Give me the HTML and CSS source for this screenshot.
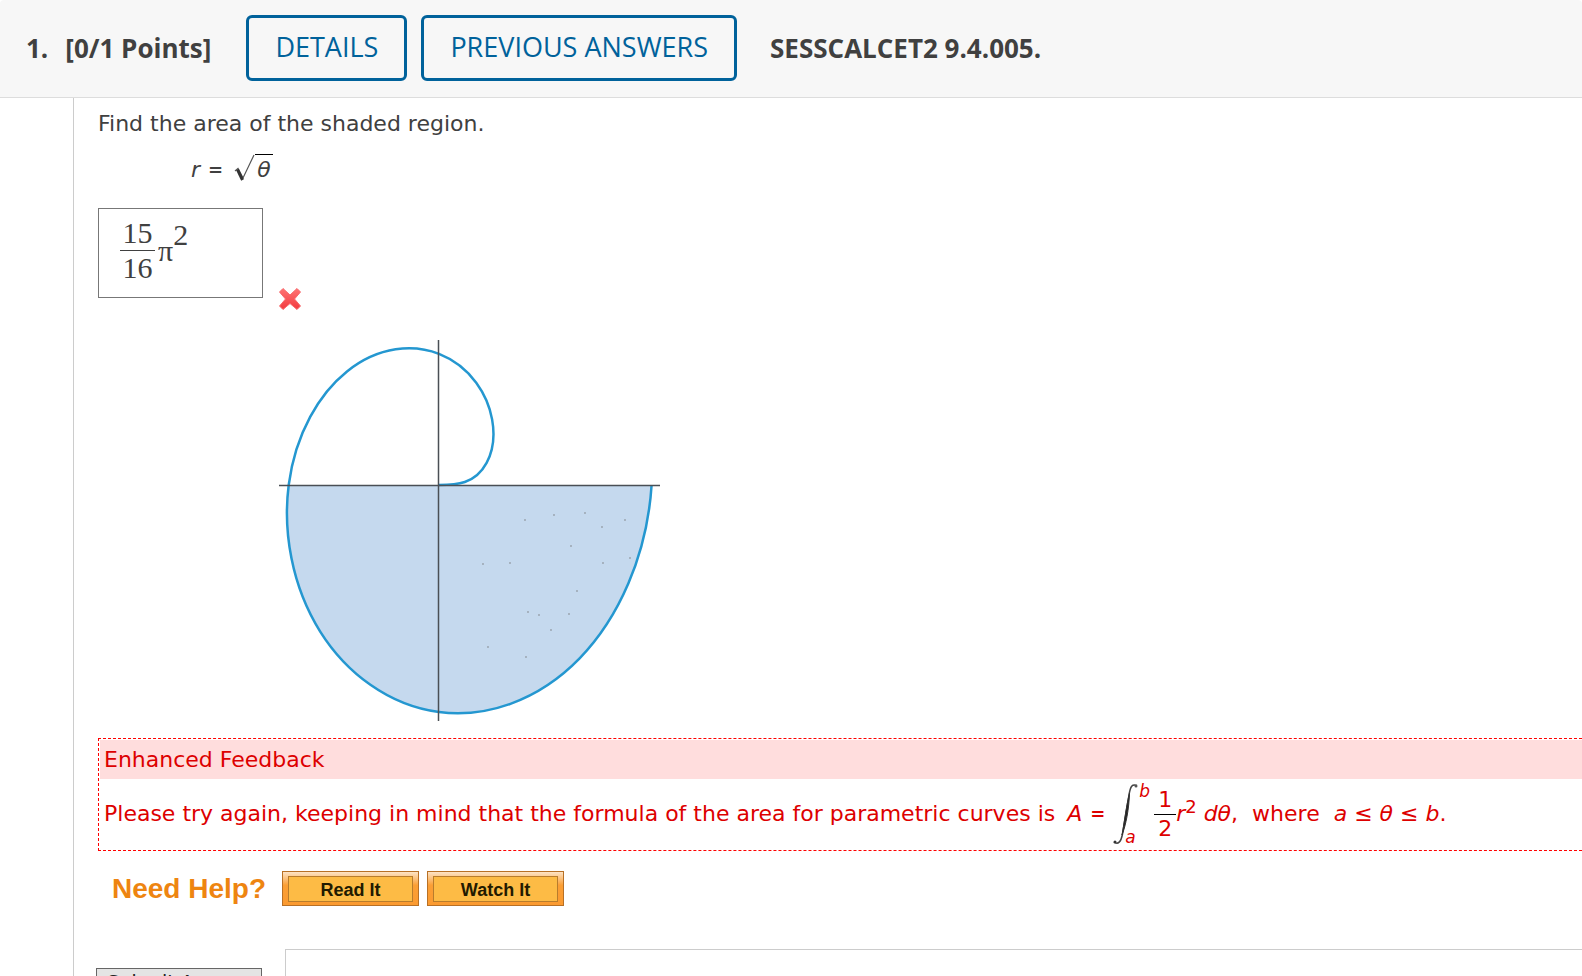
FILE: index.html
```
<!DOCTYPE html>
<html lang="en">
<head>
  <meta charset="UTF-8">
  <meta name="viewport" content="width=device-width, initial-scale=1.0">
  <title>SESSCALCET2 9.4.005.</title>
  <link rel="stylesheet" href="styles.css">
</head>
<body>
  <header class="question-header">
    <span class="number">1.</span>
    <span class="points">[0/1 Points]</span>
    <button type="button" class="header-btn">DETAILS</button>
    <button type="button" class="header-btn">PREVIOUS ANSWERS</button>
    <span class="code">SESSCALCET2 9.4.005.</span>
  </header>

  <main class="question">
    <p class="prompt">Find the area of the shaded region.</p>

    <div class="equation">
      <i>r</i>
      <b>=</b>
      <span class="root">
        <svg class="radical" width="21" height="28" viewBox="0 0 21 28">
          <path d="M1 17 L4 14.500 L9 24 L20 1" fill="none" stroke="#555" stroke-width="1.200"/>
          <path d="M3.500 15.500 L8.500 26" stroke="#333" stroke-width="3"/>
        </svg>
        <i class="radicand">θ</i>
      </span>
    </div>

    <div class="answer-row">
      <div class="answer">
        <span class="fraction"><span>15</span><span class="denominator">16</span></span>
        <span class="pi">π</span>
        <span class="power">2</span>
      </div>
      <svg class="wrong" width="24" height="24" viewBox="0 0 24 24" role="img" aria-label="Incorrect">
        <defs>
          <linearGradient id="cross" x1="0" y1="0" x2="0" y2="1">
            <stop offset="0" stop-color="#ff7474"/>
            <stop offset="1" stop-color="#f23a3e"/>
          </linearGradient>
        </defs>
        <path d="M5 1.500 L12 8 L19 1.500 L22.500 5 L16.500 12 L22.500 19 L19 22.500 L12 16.500 L5 22.500 L1.500 19 L7.500 12 L1.500 5 Z" fill="url(#cross)" stroke="#f8686b" stroke-linejoin="round"/>
      </svg>
    </div>

    <svg class="graph" width="382" height="382" viewBox="0 0 382 382" role="img" aria-label="Spiral with the lower half shaded">
      <path class="region" d="M9.700 145 C3.800 190.800 12.500 245.900 41.200 291.600 C67.100 332.800 109.600 365.500 160 372.100 C206.400 378.100 258.900 361.300 300.600 318.400 C339.400 278.500 368 216 372.600 145 Z"/>
      <path class="curve" d="M160 145 C177 145 196 144.400 207.600 122.900 C213.100 112.600 216.400 97.600 213.100 79.400 C209 56.200 192.600 26.700 160 13.900 C135 4.100 100.100 5.700 68 31.500 C40.800 53.200 16.400 93 9.700 145 C3.800 190.800 12.500 245.900 41.200 291.600 C67.100 332.800 109.600 365.500 160 372.100 C206.400 378.100 258.900 361.300 300.600 318.400 C339.400 278.500 368 216 372.600 145"/>
      <path class="axis" d="M0 145.500 H381 M159.500 0 V381"/>
      <path class="specks" d="M246 180h0M275 175h0M306 173h0M323 187h0M346 180h0M292 206h0M204 224h0M231 223h0M324 223h0M351 218h0M298 251h0M249 272h0M260 275h0M290 274h0M272 290h0M209 307h0M247 317h0"/>
    </svg>

    <section class="feedback">
      <h2 class="feedback-title">Enhanced Feedback</h2>
      <div class="feedback-body">
        <span>Please try again, keeping in mind that the formula of the area for parametric curves is</span>
        <span class="formula">
          <i>A</i>
          <span class="equals">=</span>
          <span class="integral">
            <svg width="26" height="62" viewBox="0 0 26 62">
              <path d="M1 59 C5 62 8 59 9.500 51 L16 12 C17.500 3 19 1 24 2.500" fill="none" stroke="#444" stroke-width="1.500"/>
              <path d="M9 52 C11 42 13 24 16.500 10 C16 26 13 42 9 52 Z" fill="#222" stroke="#333"/>
              <circle cx="2" cy="59" r="1.500" fill="#333"/>
              <circle cx="23" cy="3" r="1.500" fill="#555"/>
            </svg>
            <span class="limits"><i>b</i><i class="lower">a</i></span>
          </span>
          <span class="half"><span>1</span><span class="denominator">2</span></span>
          <span class="integrand"><i>r</i><sup>2</sup> <i>dθ</i>,</span>
        </span>
        <span class="where">where</span>
        <span class="range"><i>a</i> ≤ <i>θ</i> ≤ <i>b</i>.</span>
      </div>
    </section>

    <div class="help">
      <span class="help-label">Need Help?</span>
      <button type="button" class="help-btn"><span>Read It</span></button>
      <button type="button" class="help-btn"><span>Watch It</span></button>
    </div>

    <div class="submit-row">
      <button type="button" class="submit">Submit Answer</button>
      <div class="submit-panel"></div>
    </div>
  </main>
</body>
</html>
```
FILE: styles.css
```
* {
  box-sizing: border-box;
}

body {
  display: flex;
  flex-direction: column;
  height: 100vh;
  margin: 0;
  overflow: hidden;
  background: #fff;
  color: #404040;
  font-family: Verdana, "DejaVu Sans", sans-serif;
  font-size: 22px;
}

button {
  cursor: pointer;
}

.question-header {
  display: flex;
  flex-shrink: 0;
  align-items: center;
  height: 98px;
  padding: 0 26px 2px;
  background: #f7f7f7;
  border-bottom: 1px solid #ddd;
  border-radius: 4px 4px 0 0;
  font-family: "Open Sans", sans-serif;
  font-size: 26px;
  font-weight: 700;
  line-height: 34px;
  white-space: nowrap;
}

.points {
  margin: 0 35px 0 17px;
}

.header-btn {
  height: 66px;
  margin-right: 14px;
  padding: 0 26px 2px;
  background: transparent;
  border: 3px solid #00629b;
  border-radius: 6px;
  color: #00629b;
  font: 500 27px "Open Sans", sans-serif;
}

.code {
  margin-left: 19px;
}

.question {
  display: flex;
  flex: 1;
  flex-direction: column;
  align-items: flex-start;
  min-height: 0;
  margin-left: 73px;
  padding: 11px 0 0 24px;
  border-left: 1px solid #ccc;
}

.question > * {
  flex-shrink: 0;
}

.prompt {
  margin: 0;
  line-height: 30px;
}

.equation {
  display: flex;
  gap: 8px;
  align-items: center;
  height: 30px;
  margin: 15px 0 0 93px;
}

.equation b {
  font-size: 18px;
}

.root {
  display: flex;
  align-items: flex-start;
  margin-left: 3px;
}

.radicand {
  padding: 0 2px;
  border-top: 1px solid #000;
  line-height: 30px;
}

.answer-row {
  display: flex;
  gap: 15px;
  align-items: flex-end;
  margin-top: 24px;
}

.answer {
  display: flex;
  align-items: center;
  width: 165px;
  height: 90px;
  padding: 0 21px 6px;
  border: 1px solid #777;
  font-family: "Liberation Serif", serif;
  font-size: 30px;
}

.fraction {
  display: flex;
  flex-direction: column;
  align-items: center;
  width: 35px;
  line-height: 34px;
}

.denominator {
  width: 100%;
  border-top: 1px solid currentColor;
  text-align: center;
}

.pi {
  margin-left: 3px;
  padding-top: 2px;
}

.power {
  padding-bottom: 30px;
}

.wrong {
  margin-bottom: -13px;
}

.graph {
  margin: 42px 0 0 181px;
}

.region {
  fill: #c5d9ee;
}

.curve {
  fill: none;
  stroke: #2497d0;
  stroke-width: 2.5;
}

.axis {
  fill: none;
  stroke: #4a4f55;
  stroke-width: 1.5;
}

.specks {
  stroke: #9ba5b0;
  stroke-width: 2;
  stroke-linecap: round;
}

.feedback {
  align-self: stretch;
  height: 113px;
  margin-top: 16px;
  padding: 1px 0 1px 1px;
  border: 1px dashed #f00;
  border-right: 0;
  color: #d00;
}

.feedback-title {
  margin: 0;
  padding: 1px 4px 0;
  background: #fdd;
  font-size: 22px;
  font-weight: 400;
  line-height: 38px;
}

.feedback-body {
  display: flex;
  align-items: center;
  height: 70px;
  padding: 0 4px;
  line-height: 24px;
  white-space: nowrap;
}

.formula {
  display: flex;
  align-items: center;
  margin-left: 12px;
}

.equals {
  margin: 0 8px;
  font-size: 18px;
  font-weight: 700;
}

.integral {
  display: flex;
}

.limits {
  display: flex;
  flex-direction: column;
  justify-content: space-between;
  font-size: 17px;
  line-height: 16px;
}

.lower {
  margin-left: -14px;
}

.half {
  display: flex;
  flex-direction: column;
  align-items: center;
  width: 22px;
  margin-left: 4px;
  line-height: 28px;
}

.half .denominator {
  border-color: #000;
}

.integrand sup {
  font-size: 18px;
  line-height: 0;
}

.where {
  margin: 0 14px;
}

.help {
  display: flex;
  gap: 8px;
  align-items: center;
  margin: 20px 0 0 14px;
}

.help-label {
  margin-right: 8px;
  color: #ee8511;
  font: 700 28px "Liberation Sans", Arial, sans-serif;
}

.help-btn {
  width: 137px;
  height: 35px;
  padding: 4px 5px;
  background: linear-gradient(#fde3c5, #fb9f35 40%, #fb9a30);
  border: 1px solid #b87025;
  color: #221a00;
  font: 700 18px "Liberation Sans", Arial, sans-serif;
}

.help-btn span {
  display: block;
  padding-top: 2px;
  border: 1px solid #b87c2c;
  background: #fdbb45;
  line-height: 22px;
}

.submit-row {
  display: flex;
  align-self: stretch;
  align-items: flex-start;
  margin: 43px 0 0 -2px;
}

.submit {
  width: 166px;
  height: 28px;
  margin-top: 19px;
  padding: 0;
  background: #e4e4e4;
  border: 1px solid #666;
  color: #222;
  font: 19px Verdana, "DejaVu Sans", sans-serif;
}

.submit-panel {
  flex: 1;
  height: 80px;
  margin-left: 23px;
  border-top: 1px solid #ccc;
  border-left: 1px solid #ccc;
}
```
